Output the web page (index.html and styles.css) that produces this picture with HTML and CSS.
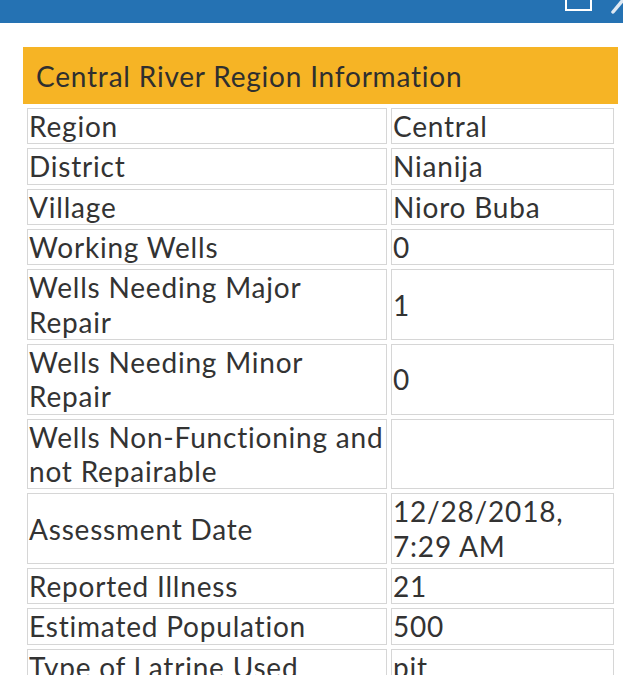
FILE: index.html
```html
<!DOCTYPE html>
<html>
<head>
<meta charset="utf-8">
<link rel="stylesheet" href="styles.css">
</head>
<body>
<div class="topbar">
  <div class="tools">
    <svg class="ico-square" width="27" height="22" viewBox="0 0 27 22"><rect x="1" y="1" width="25" height="20" fill="none" stroke="#ffffff" stroke-width="2"/></svg>
    <svg class="ico-pen" width="14" height="20" viewBox="0 0 14 20"><path d="M4 12 L14 0" stroke="#dfe9f3" stroke-width="3.5" stroke-linecap="round"/></svg>
  </div>
</div>
<div class="panel">
  <div class="title">Central River Region Information</div>
  <table class="attrs">
    <tr><td class="label">Region</td><td class="value">Central</td></tr>
    <tr><td class="label">District</td><td class="value">Nianija</td></tr>
    <tr><td class="label">Village</td><td class="value">Nioro Buba</td></tr>
    <tr><td class="label">Working Wells</td><td class="value">0</td></tr>
    <tr><td class="label">Wells Needing Major Repair</td><td class="value">1</td></tr>
    <tr><td class="label">Wells Needing Minor Repair</td><td class="value">0</td></tr>
    <tr><td class="label">Wells Non-Functioning and not Repairable</td><td class="value"></td></tr>
    <tr><td class="label">Assessment Date</td><td class="value">12/28/2018, 7:29 AM</td></tr>
    <tr><td class="label">Reported Illness</td><td class="value">21</td></tr>
    <tr><td class="label">Estimated Population</td><td class="value">500</td></tr>
    <tr><td class="label">Type of Latrine Used</td><td class="value">pit</td></tr>
  </table>
</div>
</body>
</html>
```
FILE: styles.css
```css
html, body {
  margin: 0;
  padding: 0;
  overflow: hidden;
  background: #ffffff;
}
body {
  font-family: "Lato", "Open Sans", sans-serif;
  color: #333333;
  height: 675px;
}
.topbar {
  height: 23px;
  background: #2572b3;
  overflow: hidden;
  display: flex;
  justify-content: flex-end;
}
.tools {
  display: flex;
  align-items: flex-start;
  gap: 17px;
  margin-top: -11px;
  margin-right: 0;
}
.ico-pen {
  margin-top: 11px;
}
.panel {
  margin: 24px 0 0 23px;
  width: 595px;
}
.title {
  height: 57px;
  background: #f6b425;
  box-sizing: border-box;
  padding-left: 13px;
  display: flex;
  align-items: center;
  font-size: 28px;
  letter-spacing: 0.8px;
  color: #2f2f2f;
}
.attrs {
  width: 595px;
  border-collapse: separate;
  border-spacing: 4px;
  table-layout: fixed;
  font-size: 28px;
  line-height: 34.35px;
  letter-spacing: 0.8px;
}
.attrs td {
  border: 1px solid #d6d6d6;
  padding: 0 1px;
  vertical-align: middle;
  color: #333333;
}
.attrs .label {
  width: 356px;
}
```
